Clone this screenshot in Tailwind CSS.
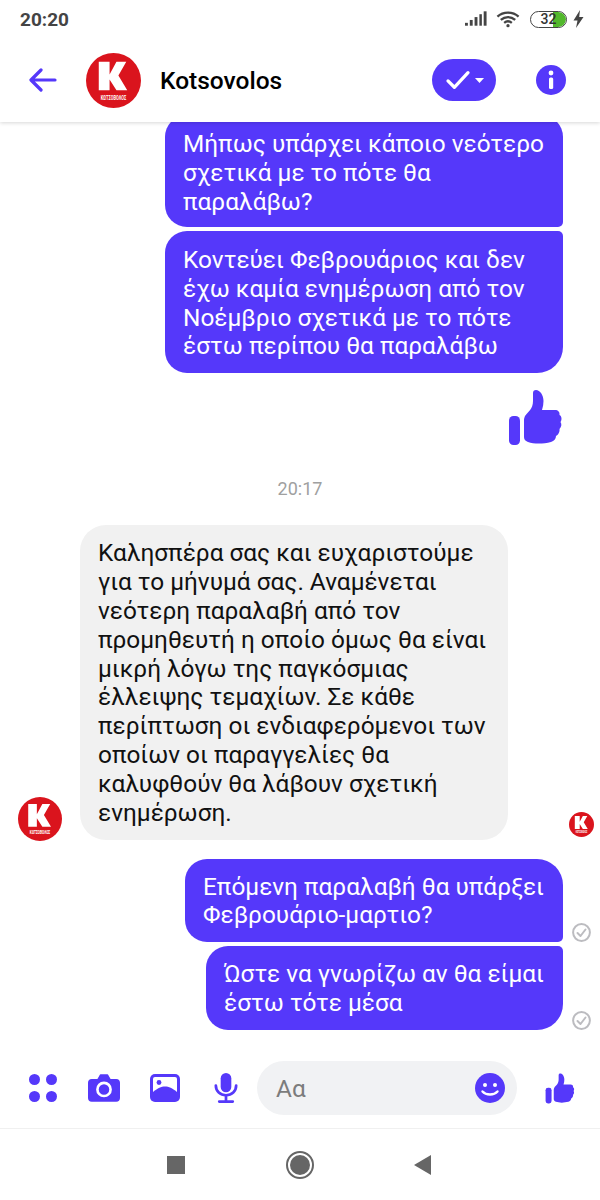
<!DOCTYPE html>
<html lang="el">
<head>
<meta charset="utf-8">
<script src="https://cdn.jsdelivr.net/npm/@tailwindcss/browser@4"></script>
</head>
<body class="bg-white">
<div class="w-[600px] h-[1200px] flex flex-col overflow-hidden bg-white font-['Roboto',sans-serif] text-[24.4px] leading-[28.85px]">
  <!-- status bar -->
  <div class="h-[46px] shrink-0 flex items-center justify-between pl-[20px] pr-[16px] pb-[8px] relative z-20 bg-white">
    <span class="text-[19px] font-bold text-[#444] leading-none">20:20</span>
    <div class="flex items-center">
      <svg width="23" height="16" viewBox="0 0 24 16" fill="#444"><rect x="0" y="12" width="3" height="3"/><rect x="5" y="9" width="3" height="6"/><rect x="10" y="6" width="3" height="9"/><rect x="15" y="3" width="2.6" height="12"/><rect x="19.5" y="0" width="3" height="15"/></svg>
      <svg class="ml-[8px]" width="24" height="18" viewBox="0 0 25 18" fill="none" stroke="#444" stroke-width="2.4"><path d="M1.500 6.500C7.500 1 17.500 1 23.500 6.500"/><path d="M5 10c4.500-4 10.500-4 15 0"/><path d="M8.500 13c2.500-2 5.500-2 8 0"/><circle cx="12.500" cy="16" r="1.700" fill="#444" stroke="none"/></svg>
      <div class="relative ml-[10px] w-[37px] h-[17px] rounded-full border-[1.5px] border-[#444] overflow-hidden flex items-center justify-center">
        <div class="absolute right-0 top-0 bottom-0 w-[13px] bg-[#52b82c] rounded-r-full"></div>
        <span class="relative text-[14px] leading-none text-[#333] font-medium">32</span>
      </div>
      <svg class="ml-[6px]" width="11" height="18" viewBox="0 0 11 18" fill="#444"><path d="M7 0 .5 10.500H4.500L3 18 10.500 7H6.200Z"/></svg>
    </div>
  </div>

  <!-- header -->
  <div class="h-[76px] shrink-0 flex items-center relative z-10 bg-white shadow-[0_1px_4px_rgba(0,0,0,0.16)] pb-[8px]">
    <svg class="ml-[29px]" width="28" height="24" viewBox="0 0 28 24" fill="none" stroke="#5538fa" stroke-width="3.200" stroke-linecap="round" stroke-linejoin="round"><path d="M12 2 2 12 12 22M3 12H26"/></svg>
    <svg class="ml-[29px]" width="55" height="55" viewBox="0 0 56 56"><circle cx="28" cy="28" r="28" fill="#da141d"/><path d="M13 9H24V22L31 9H41L33 23 42 38H31L24 27V38H13Z" fill="#fff"/><text transform="translate(28 47.500) scale(.58 1)" text-anchor="middle" font-family="Roboto" font-size="7" font-weight="700" fill="#fff">ΚΩΤΣΟΒΟΛΟΣ</text></svg>
    <span class="ml-[19px] mt-[2px] text-[24.5px] font-medium text-black leading-none">Kotsovolos</span>
    <div class="ml-auto w-[64px] h-[42px] rounded-full bg-[#5538fa] flex items-center justify-center gap-[4px]">
      <svg width="26" height="20" viewBox="0 0 28 22" fill="none" stroke="#fff" stroke-width="3.600" stroke-linecap="round" stroke-linejoin="round"><path d="M3 12 10 19 25 3"/></svg>
      <svg width="9" height="5" viewBox="0 0 9 5" fill="#fff"><path d="M0 0H9L4.500 5Z"/></svg>
    </div>
    <svg class="ml-[40px] mr-[34px]" width="30" height="30" viewBox="0 0 30 30"><circle cx="15" cy="15" r="15" fill="#5538fa"/><circle cx="15" cy="8" r="2.400" fill="#fff"/><rect x="13" y="12.500" width="4.200" height="11.500" rx="1.500" fill="#fff"/></svg>
  </div>

  <!-- messages -->
  <div class="h-[908px] shrink-0 flex flex-col justify-end overflow-hidden">
    <div class="flex justify-end pr-[37px]">
      <div class="w-[398px] bg-[#5538fa] text-white rounded-l-[22px] rounded-tr-[22px] rounded-br-[5px] pl-[18px] pr-[10px] pt-[15px] pb-[10px]">Μήπως υπάρχει κάποιο νεότερο σχετικά με το πότε θα παραλάβω?</div>
    </div>
    <div class="flex justify-end pr-[37px] mt-[4px]">
      <div class="w-[398px] bg-[#5538fa] text-white rounded-l-[22px] rounded-tr-[5px] rounded-br-[26px] pl-[18px] pr-[10px] pt-[15px] pb-[12px]">Κοντεύει Φεβρουάριος και δεν έχω καμία ενημέρωση από τον Νοέμβριο σχετικά με το πότε έστω περίπου θα παραλάβω</div>
    </div>
    <div class="flex justify-end pr-[37px] mt-[16px]">
      <svg width="55" height="57" viewBox="0 0 55 57" fill="#5538fa"><rect x="1" y="27" width="11" height="29" rx="4.500"/><path d="M17 27C20 23 25 20 25 12V4C25 2 26 1 28 1 32 1 35.500 6 35.500 12 35.500 15 35 18 34 21H47C50 21 52 23 51.500 26 54 27 54 31 52.500 33 54 35 53.500 38 51.500 40 52 43 50 46 48 47 48 50 46 52 43 53 35 55 26 55 20 53 17 52 16 50 16 48V31C16 30 16.500 28 17 27Z"/></svg>
    </div>
    <div class="text-center text-[18px] leading-[20px] text-[#a0a0a0] mt-[33px]">20:17</div>
    <div class="relative flex pl-[80px] mt-[26px]">
      <svg class="absolute left-[18px] bottom-[-1px]" width="44" height="44" viewBox="0 0 56 56"><circle cx="28" cy="28" r="28" fill="#da141d"/><path d="M13 9H24V22L31 9H41L33 23 42 38H31L24 27V38H13Z" fill="#fff"/><text transform="translate(28 47.500) scale(.58 1)" text-anchor="middle" font-family="Roboto" font-size="7" font-weight="700" fill="#fff">ΚΩΤΣΟΒΟΛΟΣ</text></svg>
      <div class="w-[428px] bg-[#f1f1f1] text-[#111] rounded-[26px] pl-[18px] pr-[10px] pt-[14px] pb-[12px]">Καλησπέρα σας και ευχαριστούμε για το μήνυμά σας. Αναμένεται νεότερη παραλαβή από τον προμηθευτή η οποίο όμως θα είναι μικρή λόγω της παγκόσμιας έλλειψης τεμαχίων. Σε κάθε περίπτωση οι ενδιαφερόμενοι των οποίων οι παραγγελίες θα καλυφθούν θα λάβουν σχετική ενημέρωση.</div>
      <svg class="absolute left-[569px] bottom-[3px]" width="25" height="25" viewBox="0 0 56 56"><circle cx="28" cy="28" r="28" fill="#da141d"/><path d="M13 9H24V22L31 9H41L33 23 42 38H31L24 27V38H13Z" fill="#fff"/><text transform="translate(28 47.500) scale(.58 1)" text-anchor="middle" font-family="Roboto" font-size="7" font-weight="700" fill="#fff">ΚΩΤΣΟΒΟΛΟΣ</text></svg>
    </div>
    <div class="flex justify-end items-end mt-[19px]">
      <div class="w-[378px] bg-[#5538fa] text-white rounded-l-[22px] rounded-tr-[26px] rounded-br-[5px] pl-[18px] pr-[10px] pt-[14px] pb-[12px]">Επόμενη παραλαβή θα υπάρξει Φεβρουάριο-μαρτιο?</div>
      <div class="w-[37px] pl-[9px]">
        <svg class="block" width="19" height="19" viewBox="0 0 19 19" fill="none" stroke="#bcbcc0" stroke-width="2" stroke-linecap="round" stroke-linejoin="round"><circle cx="9.500" cy="9.500" r="8.400"/><path d="M5.500 10 8.500 13 13.500 6.500"/></svg>
      </div>
    </div>
    <div class="flex justify-end items-end mt-[4px]">
      <div class="w-[357px] bg-[#5538fa] text-white rounded-l-[22px] rounded-tr-[5px] rounded-br-[26px] pl-[18px] pr-[10px] pt-[14px] pb-[12px]">Ώστε να γνωρίζω αν θα είμαι έστω τότε μέσα</div>
      <div class="w-[37px] pl-[9px]">
        <svg class="block" width="19" height="19" viewBox="0 0 19 19" fill="none" stroke="#bcbcc0" stroke-width="2" stroke-linecap="round" stroke-linejoin="round"><circle cx="9.500" cy="9.500" r="8.400"/><path d="M5.500 10 8.500 13 13.500 6.500"/></svg>
      </div>
    </div>
  </div>

  <!-- composer -->
  <div class="h-[99px] shrink-0 pt-[31px] border-b border-[#f0f0f0] bg-white">
    <div class="h-[54px] flex items-center">
      <svg class="ml-[29px]" width="28" height="28" viewBox="0 0 28 28" fill="#5538fa"><circle cx="5.500" cy="5.500" r="5.500"/><circle cx="22.500" cy="5.500" r="5.500"/><circle cx="5.500" cy="22.500" r="5.500"/><circle cx="22.500" cy="22.500" r="5.500"/></svg>
      <svg class="ml-[31px]" width="32" height="28" viewBox="0 0 34 29"><path d="M4 5H10L12 1.500C12.500 .5 13 0 14 0H20C21 0 21.500 .5 22 1.500L24 5H30C32.500 5 34 6.500 34 9V25C34 27.500 32.500 29 30 29H4C1.500 29 0 27.500 0 25V9C0 6.500 1.500 5 4 5Z" fill="#5538fa"/><circle cx="17" cy="16" r="7" fill="#5538fa" stroke="#fff" stroke-width="2.800"/></svg>
      <svg class="ml-[30px]" width="30" height="28" viewBox="0 0 30 28"><rect width="30" height="28" rx="5" fill="#5538fa"/><rect x="3" y="3" width="24" height="22" rx="2" fill="#fff"/><circle cx="9" cy="8.500" r="2.400" fill="#5538fa"/><path d="M3 18C8 14 11 12.500 15 12.500 19 12.500 22 14 27 18V25H3Z" fill="#5538fa"/></svg>
      <svg class="ml-[34px]" width="24" height="30" viewBox="0 0 24 31" fill="none"><rect x="6.500" y="0" width="11" height="20" rx="5.500" fill="#5538fa"/><path d="M1.500 13C1.500 19 6 23 12 23 18 23 22.500 19 22.500 13" stroke="#5538fa" stroke-width="2.800" stroke-linecap="round"/><path d="M12 23V28M5 29.500H19" stroke="#5538fa" stroke-width="2.800" stroke-linecap="round"/></svg>
      <div class="ml-[19px] w-[260px] h-[54px] rounded-full bg-[#f1f2f4] flex items-center justify-between pl-[19px] pr-[12px]">
        <span class="text-[24.4px] text-[#7c7c7c] leading-none mt-[3px]">Αα</span>
        <svg width="30" height="30" viewBox="0 0 30 30"><circle cx="15" cy="15" r="15" fill="#5538fa"/><circle cx="10" cy="12" r="2" fill="#fff"/><circle cx="20" cy="12" r="2" fill="#fff"/><path d="M7.500 18.500C11 22.500 19 22.500 22.500 18.500" stroke="#fff" stroke-width="2.400" fill="none" stroke-linecap="round"/></svg>
      </div>
      <svg class="ml-[28px]" width="30" height="31" viewBox="0 0 55 57" fill="#5538fa"><rect x="1" y="27" width="11" height="29" rx="4.500"/><path d="M17 27C20 23 25 20 25 12V4C25 2 26 1 28 1 32 1 35.500 6 35.500 12 35.500 15 35 18 34 21H47C50 21 52 23 51.500 26 54 27 54 31 52.500 33 54 35 53.500 38 51.500 40 52 43 50 46 48 47 48 50 46 52 43 53 35 55 26 55 20 53 17 52 16 50 16 48V31C16 30 16.500 28 17 27Z"/></svg>
    </div>
  </div>

  <!-- nav -->
  <div class="flex-1 flex items-center bg-white">
    <div class="ml-[167px] w-[18px] h-[18px] bg-[#666]"></div>
    <div class="ml-[101px] w-[28px] h-[28px] rounded-full border-2 border-[#666] flex items-center justify-center"><div class="w-[20px] h-[20px] rounded-full bg-[#666]"></div></div>
    <svg class="ml-[100px]" width="17" height="20" viewBox="0 0 17 20" fill="#666"><path d="M17 0V20L0 10Z"/></svg>
  </div>
</div>
</body>
</html>
